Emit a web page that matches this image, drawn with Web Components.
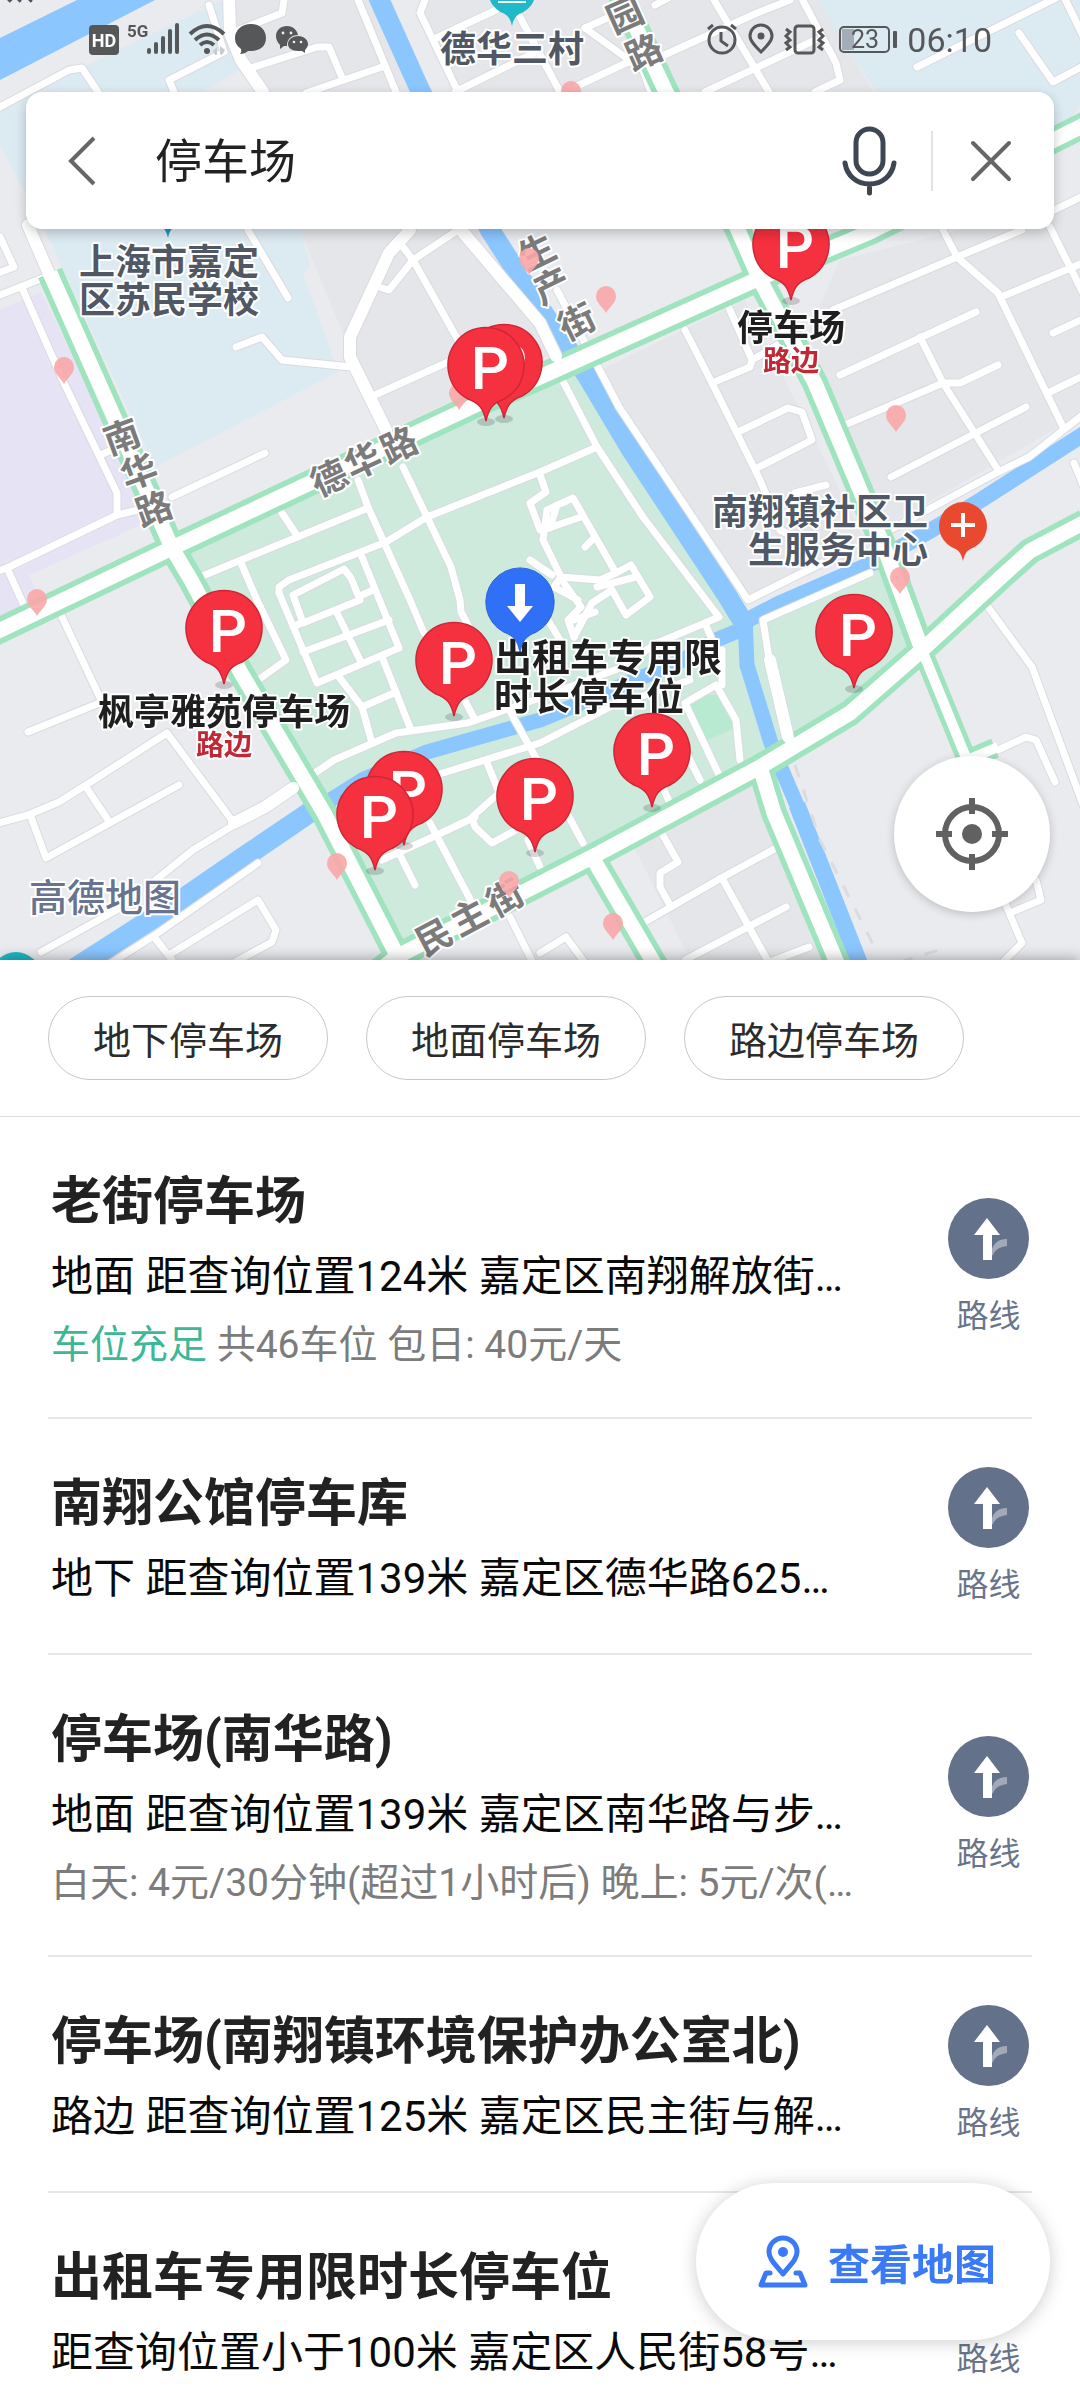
<!DOCTYPE html>
<html lang="zh-CN">
<head>
<meta charset="utf-8">
<meta name="viewport" content="width=device-width, initial-scale=1">
<title>停车场</title>
<style>
  body {
    margin: 0;
    background: #fff;
    color: #222;
    font-family: Roboto, "Noto Sans CJK SC", sans-serif;
  }
</style>
</head>
<body>
<parking-app></parking-app>

<script>
// ---------- status bar ----------
const statusTemplate = document.createElement("template");
statusTemplate.innerHTML = `
  <style>
    :host {
      display: flex;
      justify-content: space-between;
      align-items: center;
      height: 80px;
      padding: 0 88px;
      color: #555759;
    }
    div {
      display: flex;
      align-items: center;
    }
    svg {
      display: block;
      flex: none;
    }
    .right {
      gap: 8px;
    }
    time {
      font-size: 34px;
      line-height: 40px;
    }
  </style>
  <div>
    <svg width="222" height="40" viewBox="88 20 222 40" fill="currentColor">
      <rect x="89" y="25" width="30" height="30" rx="4"/>
      <text x="104" y="47" font-size="18" font-weight="700" fill="#fff" text-anchor="middle">HD</text>
      <text x="127" y="37" font-size="17" font-weight="700">5G</text>
      <rect x="147" y="48" width="4" height="6" rx="2"/>
      <rect x="154" y="42" width="4" height="12" rx="2"/>
      <rect x="161" y="36" width="4" height="18" rx="2"/>
      <rect x="168" y="29" width="4" height="25" rx="2"/>
      <rect x="175" y="23" width="4" height="31" rx="2"/>
      <g fill="none" stroke="currentColor" stroke-width="4">
        <path d="M190 34Q207 18 224 34M195 40Q207 29 219 40M200 45Q207 39 214 45"/>
      </g>
      <circle cx="207" cy="51" r="3"/>
      <path d="M213 51l4-4v8h-2zM220 46l5 4-3 5-2-1z" fill="#c6cbd0"/>
      <path d="M251 24c9 0 15 6 15 14s-6 13-15 13h-3c-2 2-5 3-8 3q2-2 1-5c-4-3-6-6-6-11 0-8 7-14 16-14z"/>
      <path d="M287 26c6 0 10 4 11 9-7 0-11 4-11 11h-3l-4 3v-4c-2-2-4-5-4-9 0-6 5-10 11-10z"/>
      <path d="M298 36c6 0 10 4 10 8 0 2-1 4-3 6v3l-3-2h-4c-6 0-10-3-10-7s4-8 10-8z"/>
      <g fill="#eef1f4"><circle cx="283" cy="33" r="1.4"/><circle cx="291" cy="33" r="1.4"/><circle cx="294" cy="42" r="1.3"/><circle cx="301" cy="42" r="1.3"/></g>
    </svg>
  </div>
  <div class="right">
    <svg width="192" height="40" viewBox="708 20 192 40" fill="none" stroke="currentColor" stroke-width="3">
      <circle cx="723" cy="40" r="13"/>
      <path d="M722 32v9l7 5M709 29l5-4M737 29l-5-4"/>
      <path d="M762 52c-6-6-11-11-11-16a11 11 0 0 1 22 0c0 5-5 10-11 16z"/>
      <circle cx="762" cy="36" r="2" fill="currentColor"/>
      <rect x="796" y="26" width="19" height="27" rx="3"/>
      <path d="M787 29l4 3-4 4 4 4-4 3 4 4-4 3M824 29l-4 3 4 4-4 4 4 3-4 4 4 3"/>
      <rect x="841" y="27" width="49" height="25" rx="4" stroke-width="2"/>
      <g stroke="none" fill="currentColor">
        <path d="M843 29h12v21h-12z" fill="#a3adb7"/>
        <rect x="894" y="31" width="4" height="17" rx="1"/>
        <text x="866" y="48" font-size="25" text-anchor="middle">23</text>
      </g>
    </svg>
    <time>06:10</time>
  </div>
`;

class StatusBar extends HTMLElement {
  constructor() {
    super();
    this.attachShadow({ mode: "open" });
    this.shadowRoot.appendChild(statusTemplate.content.cloneNode(true));
  }
}
customElements.define("status-bar", StatusBar);

// ---------- search bar ----------
const searchTemplate = document.createElement("template");
searchTemplate.innerHTML = `
  <style>
    :host {
      display: block;
      margin: 12px 26px 0;
    }
    form {
      display: flex;
      align-items: center;
      height: 137px;
      padding: 0 33px 0 26px;
      background: #fff;
      border-radius: 16px;
      box-shadow: 0 4px 12px rgba(0, 0, 0, 0.22);
    }
    button {
      display: grid;
      place-items: center;
      flex: none;
      width: 60px;
      height: 80px;
      padding: 0;
      border: 0;
      background: none;
    }
    input {
      flex: 1;
      min-width: 0;
      margin-left: 43px;
      padding: 0 0 6px;
      border: 0;
      outline: 0;
      background: none;
      color: #222;
      font: inherit;
      font-size: 47px;
    }
    .mic {
      width: 72px;
    }
    i {
      width: 2px;
      height: 60px;
      margin: 0 28px 0 26px;
      background: #e2e2e2;
    }
  </style>
  <form>
    <button type="button" aria-label="返回">
      <svg width="30" height="52" viewBox="0 0 30 52" fill="none" stroke="#666" stroke-width="4"><path d="M27 3L4 26l23 23"/></svg>
    </button>
    <input type="text" aria-label="搜索" value="停车场">
    <button class="mic" type="button" aria-label="语音">
      <svg width="56" height="72" viewBox="0 0 56 72" fill="none" stroke="#3e4653" stroke-width="5" stroke-linecap="round">
        <rect x="15" y="4" width="27" height="45" rx="13.500"/>
        <path d="M4 38c2 13 12 21 24.500 21S51 51 53 38M28.500 60v8"/>
      </svg>
    </button>
    <i></i>
    <button type="button" aria-label="清除">
      <svg width="42" height="42" viewBox="0 0 42 42" fill="none" stroke="#666" stroke-width="4" stroke-linecap="round"><path d="M3 3l36 36M39 3L3 39"/></svg>
    </button>
  </form>
`;

class SearchBar extends HTMLElement {
  constructor() {
    super();
    this.attachShadow({ mode: "open" });
    this.shadowRoot.appendChild(searchTemplate.content.cloneNode(true));
  }
}
customElements.define("search-bar", SearchBar);

// ---------- map ----------
const mainRoads = [
  "-10,635 172,548 482,402 540,377 760,278 870,232 1090,122",
  "50,273 172,548 191,580 241,673 324,813 402,965",
  "600,-50 665,90 738,230 760,280 815,383 884,547 922,650",
  "380,970 396,957 592,857 760,767 850,713 922,650 1001,577 1030,551 1085,522",
  "592,857 658,970",
  "760,767 774,813 840,970",
];

const wideRoads = [
  "229,-5 230,33 241,60 263,92",
  "28,225 33,237 50,276",
  "410,230 389,253 350,337 350,357 386,430",
  "461,230 540,323 556,356",
  "234,823 265,807 293,788",
  "770,660 788,737",
];

const minorRoads = [
  "0,107 69,70 82,68 98,92", "209,5 224,52 169,80 174,92",
  "284,0 282,13 231,33", "251,68 317,47 329,47 343,80", "306,93 382,67",
  "356,-5 396,92", "425,0 420,13 458,92", "436,38 496,10", "455,92 540,50",
  "520,17 560,92", "575,87 626,63 660,57 757,13 790,0", "655,5 670,-3",
  "585,28 614,15", "585,28 643,70 650,90", "714,0 769,92",
  "800,-5 836,63 840,80 815,92", "705,92 815,40", "917,67 1060,-4",
  "1019,33 1053,82 1085,65", "1063,-5 1085,40", "1050,212 1085,195",
  "0,237 14,267 -5,274", "-5,297 43,278",
  "22,288 64,383 117,493 117,515 7,568 26,610", "117,515 138,510", "-5,572 7,568",
  "100,455 112,450", "248,230 288,298", "236,347 262,337 282,360 351,367",
  "382,288 389,290 413,260 455,232", "403,247 413,260 458,340", "375,395 448,362",
  "172,497 265,453", "564,383 597,447 643,517 719,617 705,623 657,643",
  "358,480 368,507 410,600 424,633", "403,467 427,517 451,567 460,600 461,612 469,627",
  "282,513 298,537", "200,577 241,560 368,508", "241,563 257,600 286,660 258,680",
  "279,593 279,587 289,580 386,542 427,517 540,472 597,447",
  "293,595 344,569 351,578 360,600 303,623 293,595", "362,557 399,648 317,683 279,593",
  "293,627 303,622", "360,596 373,590", "303,652 389,620", "337,613 360,660",
  "339,677 362,707 372,743", "382,657 411,730", "362,707 396,692",
  "62,617 102,702 28,732", "-5,824 28,815 59,802 86,785 167,733 234,823",
  "86,787 108,820", "31,817 46,858 179,785", "234,825 193,850 152,883",
  "41,952 120,908", "258,863 155,935 108,965", "172,953 258,900 276,930 272,942 235,962",
  "155,938 172,960", "312,775 334,760 396,733 468,723 540,698 620,668 657,643",
  "430,777 540,743 610,707 690,680", "461,693 475,720", "500,690 513,717 540,765",
  "486,760 499,793 472,817 475,827 492,843 516,830", "382,860 437,835 475,817",
  "430,823 472,903", "399,853 415,885", "510,917 534,965", "528,840 540,867",
  "557,290 585,343", "598,367 619,407 748,600 822,563", "685,330 712,383 760,480 767,497",
  "712,383 750,367 752,360 729,308", "752,360 781,343",
  "738,432 788,408 802,412 812,440 757,468", "795,493 826,485",
  "833,310 957,257 1022,230", "943,230 957,257 998,293 1063,427",
  "1001,297 1085,262", "1050,227 1085,297", "840,375 976,312", "920,337 943,383 998,470",
  "840,427 943,383 960,383 998,365", "891,477 1026,407", "1053,333 1085,318",
  "1050,392 1085,375", "877,537 998,472 1029,457 1085,413", "1074,463 1085,490",
  "780,530 800,540", "988,607 1032,667 1085,810", "998,750 1026,737 1036,740 1055,782",
  "1036,880 1041,900 1012,912", "1005,903 1022,943 1003,962", "770,665 763,620 870,573",
  "660,830 678,862 660,873 660,887 671,907", "643,923 723,877 778,847",
  "723,880 769,963", "685,960 786,907", "767,963 809,947", "540,953 566,937 585,963",
  "569,817 583,843", "664,790 672,808", "720,777 685,703 716,685 736,720 740,760",
  "680,740 700,780", "722,650 722,685", "705,623 712,640",
  "547,510 573,498 616,573 600,580 561,577 543,540 547,510", "543,530 581,517",
  "540,475 546,492 530,503 540,530", "557,505 550,528", "585,547 595,537",
  "616,573 631,565 650,597 626,615 612,590 592,603 574,637", "561,577 554,587 578,600",
  "564,583 581,607 568,620 574,637", "597,587 636,577", "530,560 552,575",
  "574,620 595,612", "545,615 560,640",
];

// [tip x, tip y], back to front
const parkingPins = [
  [791, 300], [504, 418], [486, 421], [224, 684], [454, 716],
  [404, 845], [375, 870], [535, 852], [652, 807], [854, 688],
];

const dotPins = [
  [571, 108], [64, 384], [37, 616], [459, 410], [529, 275], [606, 313],
  [896, 432], [900, 594], [337, 880], [509, 898], [613, 940],
];

// each road name is drawn one character at a time: [char, x, y]
const roadNames = [
  { turn: -20, chars: [["南", 122, 437], ["华", 139, 472], ["路", 154, 509]] },
  { turn: -25, chars: [["德", 329, 478], ["华", 363, 461], ["路", 399, 445]] },
  { turn: -26, chars: [["生", 537, 252], ["产", 552, 286], ["街", 577, 322]] },
  { turn: -24, chars: [["园", 625, 15], ["路", 644, 52]] },
  { turn: -28, chars: [["民", 434, 937], ["主", 469, 917], ["街", 505, 898]] },
];

const PIN = "M0 0C-3-13-7-18-18-22A38 38 0 1 1 18-22C7-18 3-13 0 0z";

const lines = (list) => list.map((p) => `<polyline points="${p}"/>`).join("");

const parkingPin = ([x, y]) => `
  <g transform="translate(${x} ${y})">
    <ellipse cy="1" rx="9" ry="4" fill="#000" opacity=".16"/>
    <path d="${PIN}" fill="#f5303f" stroke="#cf2637" stroke-width="1.500"/>
    <text class="p" x="4" y="-32">P</text>
  </g>`;

const dotPin = ([x, y]) => `
  <path transform="translate(${x} ${y})" d="M0 0C-4-7-10-10-10-17a10 10 0 0 1 20 0C10-10 4-7 0 0z"/>`;

const roadName = ({ turn, chars }) => chars.map(([c, x, y]) =>
  `<text transform="translate(${x} ${y}) rotate(${turn})" y="13">${c}</text>`).join("");

class MapView extends HTMLElement {
  constructor() {
    super();
    this.attachShadow({ mode: "open" });
    this.render();
  }

  render() {
    this.shadowRoot.innerHTML = `
      <style>
        :host {
          display: block;
          position: relative;
          flex: none;
          aspect-ratio: 9 / 8;
          overflow: hidden;
          background: #e9ebef;
        }
        .canvas {
          position: absolute;
          inset: 0;
          width: 100%;
          height: 100%;
        }
        .over {
          position: relative;
        }
        .roads polyline {
          fill: none;
          stroke-linejoin: round;
          stroke-linecap: round;
        }
        .roads .main polyline {
          stroke-linecap: butt;
        }
        .labels {
          font-size: 36px;
          font-weight: 700;
          stroke: #fff;
          stroke-width: 4px;
          stroke-linejoin: round;
          paint-order: stroke;
        }
        .big { font-size: 38px; }
        .small { font-size: 28px; }
        .logo { font-weight: 500; }
        .p {
          font: 500 60px Roboto, sans-serif;
          fill: #fff;
          text-anchor: middle;
        }
        .locate {
          position: absolute;
          right: 30px;
          bottom: 48px;
          display: grid;
          place-items: center;
          width: 156px;
          height: 156px;
          padding: 0;
          border: 0;
          border-radius: 50%;
          background: #fff;
          box-shadow: 0 2px 10px rgba(0, 0, 0, 0.2);
        }
      </style>
      <svg class="canvas" viewBox="0 0 1080 960" preserveAspectRatio="xMidYMin slice">
        <g fill="#e4e6e9">
          <path d="M230 0H380L450 150 560 350 390 430 350 350 300 230z"/>
          <path d="M420 0H820L875 95H460zM600 370L745 300 870 550 748 600z"/>
          <path d="M840 260L1080 200V415L880 530 800 350z"/>
          <path d="M633 845L750 785 825 960H690z"/>
        </g>
        <path fill="#dceaf2" d="M0 110L86 66 222 0 240 70 205 90 300 230 310 265 303 273 338 372 155 467 45 230 0 145zM817 0H1080V105L1054 140 876 92z"/>
        <path fill="#e6e3f4" d="M0 310L41 292 152 520 29 575 37 592 0 628z"/>
        <path fill="#cdeadd" d="M172 548L575 360 600 400 660 500 745 618 895 556 922 650 850 713 400 957z"/>
        <path fill="#b8e9d1" d="M689 705L698 695 719 695 735 728 707 740z"/>
        <g fill="none" stroke="#8bc6ff" stroke-linejoin="round">
          <path fill="#8bc6ff" stroke="none" d="M0 38L77 0H155L0 80z"/>
          <path stroke-width="20" d="M375-10L420 90 490 230 540 308 570 352 586 374 630 448 728 597 745 625"/>
          <path stroke-width="15" d="M745 618L747 665 771 743 781 768 799 810"/>
          <path stroke-width="17" d="M797 805L862 970"/>
          <path stroke-width="16" d="M740 624L778 604 875 562 940 525 981 500 1090 430"/>
          <path stroke-width="15" d="M745 628L716 640 683 660 626 684 540 720 427 752 362 780 324 804"/>
          <path stroke-width="21" d="M330 798L303 817 241 859 186 897 60 978"/>
        </g>
        <path d="M795 765L820 840 876 950M900 962L945 948" fill="none" stroke="#dbdce0" stroke-width="3" stroke-dasharray="13 13"/>
        <g class="roads">
          <g stroke="#d9dbe0" stroke-width="9">${lines(minorRoads)}</g>
          <g stroke="#d9dbe0" stroke-width="14">${lines(wideRoads)}</g>
          <g stroke="#fff" stroke-width="7">${lines(minorRoads)}</g>
          <g class="main" stroke="#9fe3bf">
            <g stroke-width="26">${lines(mainRoads)}</g>
            <polyline stroke-width="20" points="922,650 967,760 995,748"/>
          </g>
          <g stroke="#fff" stroke-width="12">${lines(wideRoads)}</g>
          <g class="main" stroke="#fff">
            <g stroke-width="15">${lines(mainRoads)}</g>
            <polyline stroke-width="10" points="922,650 967,760 998,747"/>
          </g>
        </g>

        <g fill="#1fb9c9">
          <path transform="translate(512 26) scale(.62)" d="${PIN}"/>
          <path transform="translate(168 238) scale(.62)" d="${PIN}" fill="#2196c8"/>
          <circle cx="16" cy="977" r="25"/>
          <path d="M498 2h28" stroke="#fff" stroke-width="2"/>
        </g>
        <path d="M8 1l3-3M18 1l2-2M29 1l2-2" stroke="#4c5360" stroke-width="5"/>

        <g class="labels" fill="#505866">
          <text x="440" y="62">德华三村</text>
          <text x="79" y="275">上海市嘉定</text>
          <text x="79" y="313">区苏民学校</text>
          <text x="712" y="525">南翔镇社区卫</text>
          <text x="748" y="563">生服务中心</text>
          <g fill="#7b7b7b" text-anchor="middle">${roadNames.map(roadName).join("")}</g>
          <text class="big logo" x="29" y="911" fill="#68738f">高德地图</text>
        </g>

        <g fill="#faa7a9" opacity=".9">${dotPins.map(dotPin).join("")}</g>

        <g transform="translate(963 561)">
          <path transform="scale(.63)" d="${PIN}" fill="#e9492f"/>
          <path d="M-12-36h24M0-48v24" stroke="#fff" stroke-width="4"/>
        </g>

        <g class="labels" fill="#1f1f1f">
          <text class="big" x="494" y="671">出租车专用限</text>
          <text class="big" x="494" y="710">时长停车位</text>
          <g text-anchor="middle">
            <text x="791" y="341">停车场</text>
            <text x="224" y="725">枫亭雅苑停车场</text>
            <g class="small" fill="#c02836">
              <text x="791" y="371">路边</text>
              <text x="224" y="755">路边</text>
            </g>
          </g>
        </g>

        <g transform="translate(520 652)">
          <path transform="scale(.9)" d="${PIN}" fill="#3070f7" stroke="#2a5fd6"/>
          <path d="M-5-68h10v22h8L0-30-13-46h8z" fill="#fff"/>
        </g>
        ${parkingPins.map(parkingPin).join("")}
      </svg>
      <div class="over"><slot></slot></div>
      <button class="locate" type="button" aria-label="定位">
        <svg width="76" height="76" viewBox="0 0 76 76" fill="none" stroke="#616161" stroke-width="6">
          <circle cx="38" cy="38" r="27"/>
          <path d="M38 2v16M38 58v16M2 38h16M58 38h16"/>
          <circle cx="38" cy="38" r="10" fill="#616161" stroke="none"/>
        </svg>
      </button>
    `;
  }
}
customElements.define("map-view", MapView);

// ---------- filter chip ----------
const chipTemplate = document.createElement("template");
chipTemplate.innerHTML = `
  <style>
    :host {
      display: block;
    }
    button {
      height: 84px;
      padding: 0 44px 2px;
      border: 1px solid #c8c8c8;
      border-radius: 42px;
      background: #fff;
      color: #2c2c2c;
      font: inherit;
      font-size: 38px;
      white-space: nowrap;
    }
  </style>
  <button type="button"><slot></slot></button>
`;

class FilterChip extends HTMLElement {
  constructor() {
    super();
    this.attachShadow({ mode: "open" });
    this.shadowRoot.appendChild(chipTemplate.content.cloneNode(true));
  }
}
customElements.define("filter-chip", FilterChip);

// ---------- one search result ----------
const resultTemplate = document.createElement("template");
resultTemplate.innerHTML = `
  <style>
    :host {
      display: flex;
      align-items: center;
      justify-content: space-between;
      margin: 0 48px;
      border-bottom: 2px solid #e6e6e6;
    }
    .info {
      display: flex;
      flex-direction: column;
      gap: 10px;
      min-width: 0;
      padding: 50px 3px 44px;
    }
    h2, p {
      margin: 0;
      white-space: nowrap;
    }
    h2 {
      font-size: 51px;
      font-weight: 700;
      line-height: 70px;
    }
    p {
      color: #0a0a0a;
      font-size: 42px;
      line-height: 60px;
    }
    ::slotted([slot="extra"]) {
      color: #7c7c7c;
      font-size: 39px;
      line-height: 56px;
      white-space: nowrap;
    }
    button {
      display: flex;
      flex: none;
      flex-direction: column;
      align-items: center;
      gap: 17px;
      padding: 0 3px;
      border: 0;
      background: none;
      color: #69748a;
      font: inherit;
      font-size: 32px;
      line-height: 40px;
    }
    svg {
      display: block;
    }
  </style>
  <div class="info">
    <h2></h2>
    <p><slot></slot></p>
    <slot name="extra"></slot>
  </div>
  <button type="button">
    <svg width="81" height="81" viewBox="0 0 81 81">
      <circle cx="40.500" cy="40.500" r="40.500" fill="#64718a"/>
      <path d="M43 58c0-11 6-17 16-17v7c-8 1-12 4-14 9z" fill="#a2aab9"/>
      <path d="M39 20l13 17h-8v25h-9V37h-9z" fill="#fff"/>
    </svg>
    路线
  </button>
`;

class ParkingResult extends HTMLElement {
  static get observedAttributes() {
    return ["name"];
  }

  constructor() {
    super();
    this.attachShadow({ mode: "open" });
    this.shadowRoot.appendChild(resultTemplate.content.cloneNode(true));
  }

  attributeChangedCallback() {
    this.shadowRoot.querySelector("h2").textContent = this.getAttribute("name");
  }
}
customElements.define("parking-result", ParkingResult);

// ---------- floating "view map" button ----------
const mapButtonTemplate = document.createElement("template");
mapButtonTemplate.innerHTML = `
  <style>
    :host {
      display: block;
      position: fixed;
      right: 30px;
      bottom: 60px;
    }
    button {
      display: flex;
      align-items: center;
      gap: 20px;
      height: 157px;
      padding: 0 54px 0 62px;
      border: 0;
      border-radius: 79px;
      background: #fff;
      box-shadow: 0 2px 18px rgba(0, 0, 0, 0.2);
      color: #3a79f7;
      font: inherit;
      font-size: 42px;
      font-weight: 700;
    }
  </style>
  <button type="button">
    <svg width="50" height="54" viewBox="0 0 50 54" fill="none" stroke="currentColor" stroke-width="5" stroke-linejoin="round" stroke-linecap="round">
      <path d="M25 39C17 29 11 24 11 17a14 14 0 0 1 28 0c0 7-6 12-14 22z"/>
      <circle cx="25" cy="17" r="5" fill="currentColor" stroke="none"/>
      <path d="M12 38H8L3 50h44l-5-12h-4"/>
    </svg>
    <slot></slot>
  </button>
`;

class MapButton extends HTMLElement {
  constructor() {
    super();
    this.attachShadow({ mode: "open" });
    this.shadowRoot.appendChild(mapButtonTemplate.content.cloneNode(true));
  }
}
customElements.define("map-button", MapButton);

// ---------- app ----------
const appTemplate = document.createElement("template");
appTemplate.innerHTML = `
  <style>
    :host {
      display: flex;
      flex-direction: column;
      height: 100vh;
      overflow: hidden;
    }
    main {
      display: flex;
      flex: 1;
      flex-direction: column;
      position: relative;
      min-height: 0;
      background: #fff;
      box-shadow: 0 -2px 12px rgba(0, 0, 0, 0.3);
    }
    nav {
      display: flex;
      gap: 38px;
      padding: 36px 48px;
      border-bottom: 1px solid #dedede;
    }
    .results {
      flex: 1;
      min-height: 0;
      overflow-y: auto;
      scrollbar-width: none;
    }
    b {
      color: #3cb896;
      font-weight: 400;
    }
  </style>
  <map-view>
    <status-bar></status-bar>
    <search-bar></search-bar>
  </map-view>
  <main>
    <nav>
      <filter-chip>地下停车场</filter-chip>
      <filter-chip>地面停车场</filter-chip>
      <filter-chip>路边停车场</filter-chip>
    </nav>
    <div class="results">
      <parking-result name="老街停车场">
        地面 距查询位置124米 嘉定区南翔解放街…
        <span slot="extra"><b>车位充足</b> 共46车位 包日: 40元/天</span>
      </parking-result>
      <parking-result name="南翔公馆停车库">
        地下 距查询位置139米 嘉定区德华路625…
      </parking-result>
      <parking-result name="停车场(南华路)">
        地面 距查询位置139米 嘉定区南华路与步…
        <span slot="extra">白天: 4元/30分钟(超过1小时后) 晚上: 5元/次(…</span>
      </parking-result>
      <parking-result name="停车场(南翔镇环境保护办公室北)">
        路边 距查询位置125米 嘉定区民主街与解…
      </parking-result>
      <parking-result name="出租车专用限时长停车位">
        距查询位置小于100米 嘉定区人民街58号…
      </parking-result>
    </div>
  </main>
  <map-button>查看地图</map-button>
`;

class ParkingApp extends HTMLElement {
  constructor() {
    super();
    this.attachShadow({ mode: "open" });
    this.shadowRoot.appendChild(appTemplate.content.cloneNode(true));
  }
}
customElements.define("parking-app", ParkingApp);
</script>
</body>
</html>
